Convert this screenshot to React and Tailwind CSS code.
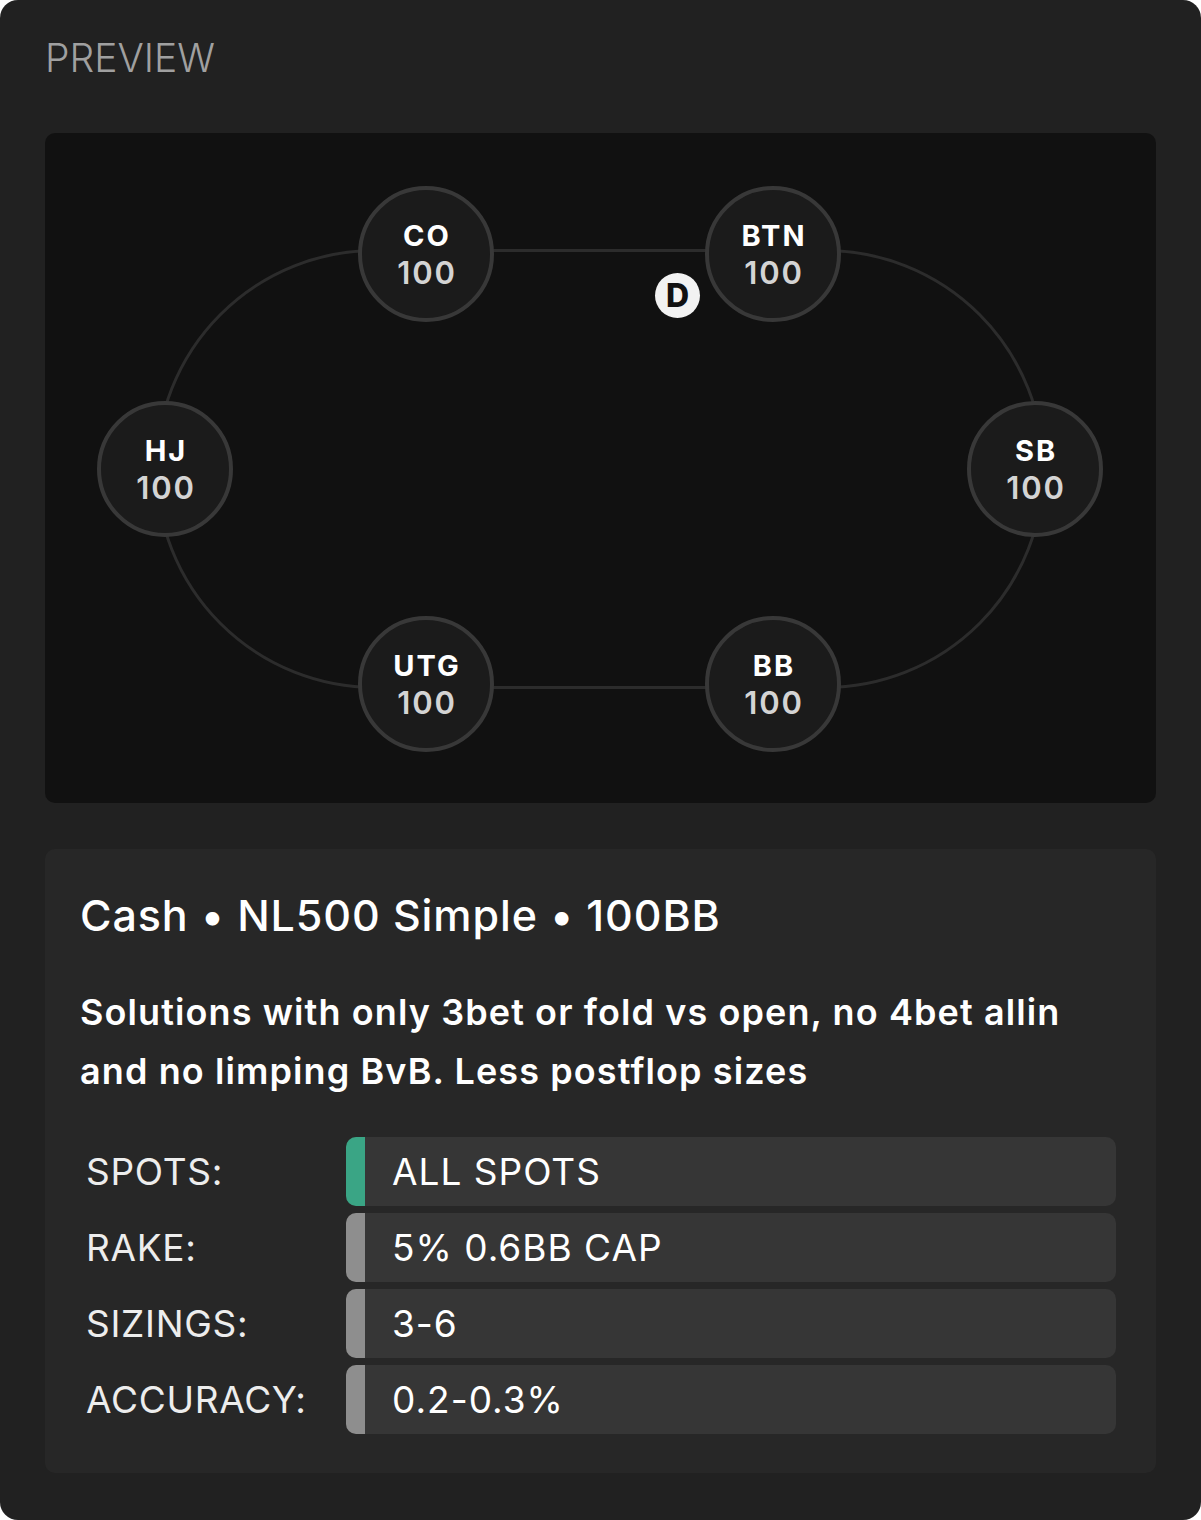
import React from "react";

const seats = [
  { pos: "CO", x: 381, y: 121 },
  { pos: "BTN", x: 728, y: 121 },
  { pos: "HJ", x: 120, y: 336 },
  { pos: "SB", x: 990, y: 336 },
  { pos: "UTG", x: 381, y: 551 },
  { pos: "BB", x: 728, y: 551 },
];

const settings = [
  { label: "SPOTS:", value: "ALL SPOTS", accent: "bg-[#3aa585]" },
  { label: "RAKE:", value: "5% 0.6BB CAP", accent: "bg-[#8e8e8e]" },
  { label: "SIZINGS:", value: "3-6", accent: "bg-[#8e8e8e]" },
  { label: "ACCURACY:", value: "0.2-0.3%", accent: "bg-[#8e8e8e]" },
];

function Seat({ pos, x, y }) {
  return (
    <div
      className="absolute flex h-[136px] w-[136px] -translate-x-1/2 -translate-y-1/2 flex-col items-center justify-center rounded-full border-[4px] border-[#383838] bg-[#1b1b1b]"
      style={{ left: x, top: y }}
    >
      <span className="pl-[2px] text-[29px] font-bold leading-[36px] tracking-[2px] text-white">{pos}</span>
      <span className="pl-[2px] text-[31px] font-semibold leading-[37px] tracking-[1.8px] text-[#d4d4d4]">100</span>
    </div>
  );
}

function Table() {
  return (
    <div className="relative mt-[51px] h-[670px] w-full rounded-[10px] bg-[#111111]">
      {/* felt outline */}
      <div className="absolute left-[110px] top-[116px] h-[440px] w-[890px] rounded-full border-[3px] border-[#2c2c2c]" />
      {seats.map((s) => (
        <Seat key={s.pos} {...s} />
      ))}
      {/* dealer button */}
      <div className="absolute left-[610px] top-[140px] flex h-[45px] w-[45px] items-center justify-center rounded-full bg-[#f2f2f2]">
        <span className="text-[32px] font-extrabold leading-none text-[#111111]">D</span>
      </div>
    </div>
  );
}

function Info() {
  return (
    <div className="mt-[46px] h-[624px] w-full rounded-[10px] bg-[#272727] pl-[35px] pr-[40px] pt-[42px]">
      <h2 className="text-[43px] font-medium leading-[48px] tracking-[0.9px] text-white">
        Cash • NL500 Simple • 100BB
      </h2>
      <p className="mt-[44px] text-[36px] font-semibold leading-[59px] tracking-[1.1px] text-white">
        Solutions with only 3bet or fold vs open, no 4bet allin
        <br />
        and no limping BvB. Less postflop sizes
      </p>
      <div className="mt-[36px] flex flex-col gap-[7px]">
        {settings.map((row) => (
          <div key={row.label} className="flex items-center">
            <div className="w-[266px] pl-[6px] text-[37px] font-normal tracking-[0.7px] text-[#ededed]">
              {row.label}
            </div>
            <div className="flex h-[69px] flex-1 items-center overflow-hidden rounded-[10px] bg-[#363636]">
              <div className={`h-full w-[19px] ${row.accent}`} />
              <span className="pl-[27px] text-[37px] font-normal tracking-[1px] text-white">{row.value}</span>
            </div>
          </div>
        ))}
      </div>
    </div>
  );
}

export default function App() {
  return (
    <div className="bg-white" style={{ fontFamily: "Inter, 'Noto Sans', sans-serif" }}>
      <div className="h-[1520px] w-[1201px] rounded-[18px] bg-[#212121] px-[45px] pt-[34px]">
        <div className="text-[39px] font-light leading-[48px] text-[#a0a0a0]">PREVIEW</div>
        <Table />
        <Info />
      </div>
    </div>
  );
}
